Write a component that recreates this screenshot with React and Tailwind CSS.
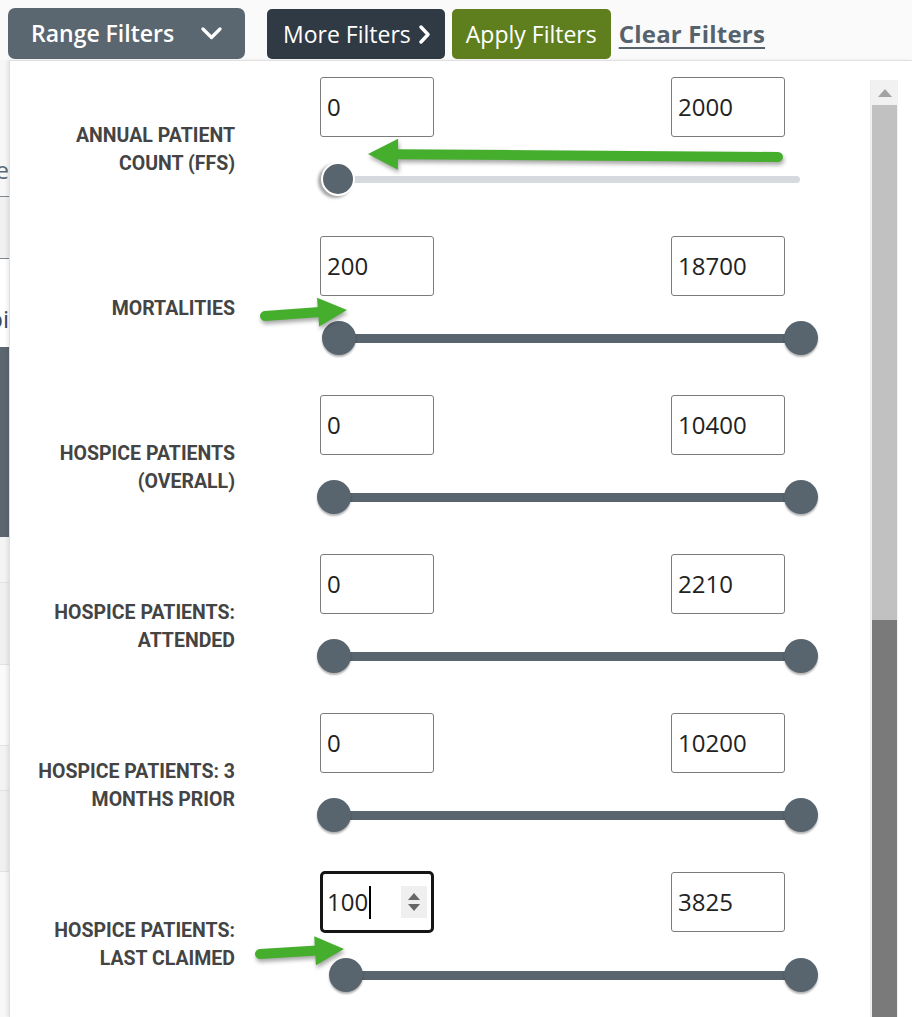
import React from 'react'

const rows = [
  { label: ['ANNUAL PATIENT', 'COUNT (FFS)'], min: '0', max: '2000', lo: 4, hi: null, light: true },
  { label: ['MORTALITIES'], min: '200', max: '18700', lo: 5, hi: 467 },
  { label: ['HOSPICE PATIENTS', '(OVERALL)'], min: '0', max: '10400', lo: 0, hi: 467 },
  { label: ['HOSPICE PATIENTS:', 'ATTENDED'], min: '0', max: '2210', lo: 0, hi: 467 },
  { label: ['HOSPICE PATIENTS: 3', 'MONTHS PRIOR'], min: '0', max: '10200', lo: 0, hi: 467 },
  { label: ['HOSPICE PATIENTS:', 'LAST CLAIMED'], min: '100', max: '3825', lo: 12, hi: 467, focused: true },
]

function Arrow({ x1, y1, x2, y2, head = 30, wide = 30 }) {
  // tail (x1,y1) -> tip (x2,y2)
  const dx = x2 - x1
  const dy = y2 - y1
  const len = Math.hypot(dx, dy)
  const ux = dx / len
  const uy = dy / len
  const bx = x2 - ux * head
  const by = y2 - uy * head
  const px = -uy * (wide / 2)
  const py = ux * (wide / 2)
  return (
    <g style={{ filter: 'drop-shadow(1px 3px 2px rgba(0,0,0,0.35))' }}>
      <line x1={x1} y1={y1} x2={bx + ux * 2} y2={by + uy * 2} stroke="#45ae2c" strokeWidth="10" strokeLinecap="round" />
      <polygon points={`${x2},${y2} ${bx + px},${by + py} ${bx - px},${by - py}`} fill="#45ae2c" />
    </g>
  )
}

function Thumb({ left, ring }) {
  return (
    <div
      className={
        'absolute top-0 h-[34px] w-[34px] rounded-full bg-[#58646e] ' +
        (ring
          ? 'border-2 border-white shadow-[-3px_2px_3px_rgba(0,0,0,0.35)]'
          : 'shadow-[0_2px_2px_rgba(0,0,0,0.3)]')
      }
      style={{ left }}
    />
  )
}

function NumberBox({ value, focused }) {
  if (focused) {
    return (
      <div className="flex h-[62px] w-[114px] -mt-[1px] items-center rounded-[5px] border-[3px] border-[#151515] bg-white pl-[4px] pr-[4px]">
        <span className="text-[24px] leading-none text-[#222]">{value}</span>
        <span className="ml-[1px] h-[33px] w-[2px] bg-black" />
        <div className="ml-auto flex h-[32px] w-[26px] flex-col items-center justify-center gap-[4px] bg-[#efefef]">
          <svg width="12" height="7" viewBox="0 0 12 7"><polygon points="6,0 12,7 0,7" fill="#666" /></svg>
          <svg width="12" height="7" viewBox="0 0 12 7"><polygon points="0,0 12,0 6,7" fill="#666" /></svg>
        </div>
      </div>
    )
  }
  return (
    <div className="flex h-[60px] w-[114px] items-center rounded-[3px] border border-[#7b7b7b] bg-white pl-[6px]">
      <span className="text-[24px] leading-none text-[#222]">{value}</span>
    </div>
  )
}

function FilterRow({ row }) {
  return (
    <div className="flex h-[142px]">
      <div className="flex w-[225px] flex-col items-end justify-center pt-[4px] text-right font-['Roboto',sans-serif] text-[19.5px] font-bold leading-[28px] text-[#444]">
        {row.label.map((l) => (
          <span key={l} className="whitespace-nowrap">{l}</span>
        ))}
      </div>
      <div className="ml-[82px] flex w-[501px] flex-col">
        <div className="flex justify-between pl-[3px] pr-[33px]">
          <NumberBox value={row.min} focused={row.focused} />
          <NumberBox value={row.max} />
        </div>
        <div className="relative mt-[25px] h-[34px]">
          {row.light ? (
            <div className="absolute left-[21px] right-[18px] top-[14px] h-[7px] rounded-full bg-[#d6dade]" />
          ) : (
            <div
              className="absolute top-[13px] h-[9px] bg-[#58646e]"
              style={{ left: row.lo + 17, width: row.hi - row.lo }}
            />
          )}
          <Thumb left={row.lo} ring={row.light} />
          {row.hi !== null && <Thumb left={row.hi} />}
        </div>
      </div>
    </div>
  )
}

function BehindStrip() {
  return (
    <div className="flex w-[9px] shrink-0 flex-col overflow-hidden bg-[#f7f7f7] font-['Open_Sans',sans-serif]">
      <div className="flex h-[136px] items-end justify-end pb-[14px]">
        <span className="whitespace-nowrap text-[24px] leading-none text-[#5b6b7c]">Type</span>
      </div>
      <div className="h-px bg-[#7d8790]" />
      <div className="h-[61px] bg-[#f1f1f1]" />
      <div className="h-px bg-[#7d8790]" />
      <div className="flex h-[88px] items-end justify-end bg-white pb-[16px]">
        <span className="whitespace-nowrap text-[24px] leading-none text-[#3c4a60]">Hospi</span>
      </div>
      <div className="h-[190px] bg-[#5b6670]" />
      <div className="h-[45px] bg-[#f4f4f4]" />
      <div className="h-px bg-[#e2e2e2]" />
      <div className="h-[81px] bg-[#f0f0f0]" />
      <div className="h-px bg-[#e2e2e2]" />
      <div className="h-[80px] bg-[#fafafa]" />
      <div className="h-px bg-[#e2e2e2]" />
      <div className="h-[44px] bg-[#f3f3f3]" />
      <div className="h-px bg-[#e2e2e2]" />
      <div className="h-[80px] bg-[#f0f0f0]" />
      <div className="h-px bg-[#e2e2e2]" />
      <div className="flex-1 bg-[#f8f8f8]" />
    </div>
  )
}

export default function App() {
  return (
    <div className="relative h-[1017px] w-[912px] overflow-hidden bg-white font-['Open_Sans',sans-serif]">
      <div className="flex h-[60px] items-start pl-[8px] pt-[8px] bg-[#fafafa]">
        <button className="flex h-[51px] w-[237px] items-center justify-between rounded-[7px] bg-[#5b6770] px-[23px] text-[23px] font-semibold text-white">
          <span>Range Filters</span>
          <svg width="21" height="13" viewBox="0 0 21 13" fill="none">
            <polyline points="2,2 10.5,10.5 19,2" stroke="white" strokeWidth="3.2" strokeLinecap="round" strokeLinejoin="round" />
          </svg>
        </button>
        <button className="ml-[22px] mt-[1px] flex h-[50px] items-center gap-[8px] rounded-[5px] bg-[#2f3a44] pl-[16px] pr-[15px] text-[23px] text-white">
          <span>More Filters</span>
          <svg width="11" height="19" viewBox="0 0 11 19" fill="none">
            <polyline points="2,2 9,9.5 2,17" stroke="white" strokeWidth="3.4" strokeLinecap="round" strokeLinejoin="round" />
          </svg>
        </button>
        <button className="ml-[7px] mt-[1px] flex h-[50px] items-center rounded-[5px] bg-[#5f7f1f] px-[14px] text-[23px] text-white">
          Apply Filters
        </button>
        <a className="ml-[8px] mt-[1px] flex h-[50px] items-center text-[24px] font-bold tracking-[0.2px] text-[#56626c] underline decoration-2 underline-offset-[4px]">
          Clear Filters
        </a>
      </div>

      <div className="flex h-[957px]">
        <BehindStrip />
        <div className="flex flex-1 border-l border-t border-[#e0e0e0] bg-white shadow-[-2px_0_3px_rgba(0,0,0,0.08)]">
          <div className="flex flex-1 flex-col gap-[17px] pt-[16px]">
            {rows.map((r) => (
              <FilterRow key={r.label.join(' ')} row={r} />
            ))}
          </div>
          <div className="mt-[19px] mr-[14px] flex w-[28px] flex-col border-l border-[#ececec] bg-[#f1f1f1]">
            <div className="flex h-[25px] items-center justify-center">
              <svg width="14" height="8" viewBox="0 0 14 8"><polygon points="7,0 14,8 0,8" fill="#a3a3a3" /></svg>
            </div>
            <div className="mx-[1px] h-[515px] bg-[#c1c1c1]" />
            <div className="mx-[1px] flex-1 bg-[#7a7a7a]" />
          </div>
        </div>
      </div>

      <svg className="pointer-events-none absolute left-0 top-0" width="912" height="1017">
        <Arrow x1={778} y1={157} x2={368} y2={154} head={30} wide={31} />
        <Arrow x1={265} y1={316} x2={347} y2={310} head={29} wide={29} />
        <Arrow x1={260} y1={954} x2={344} y2={949} head={29} wide={29} />
      </svg>
    </div>
  )
}
